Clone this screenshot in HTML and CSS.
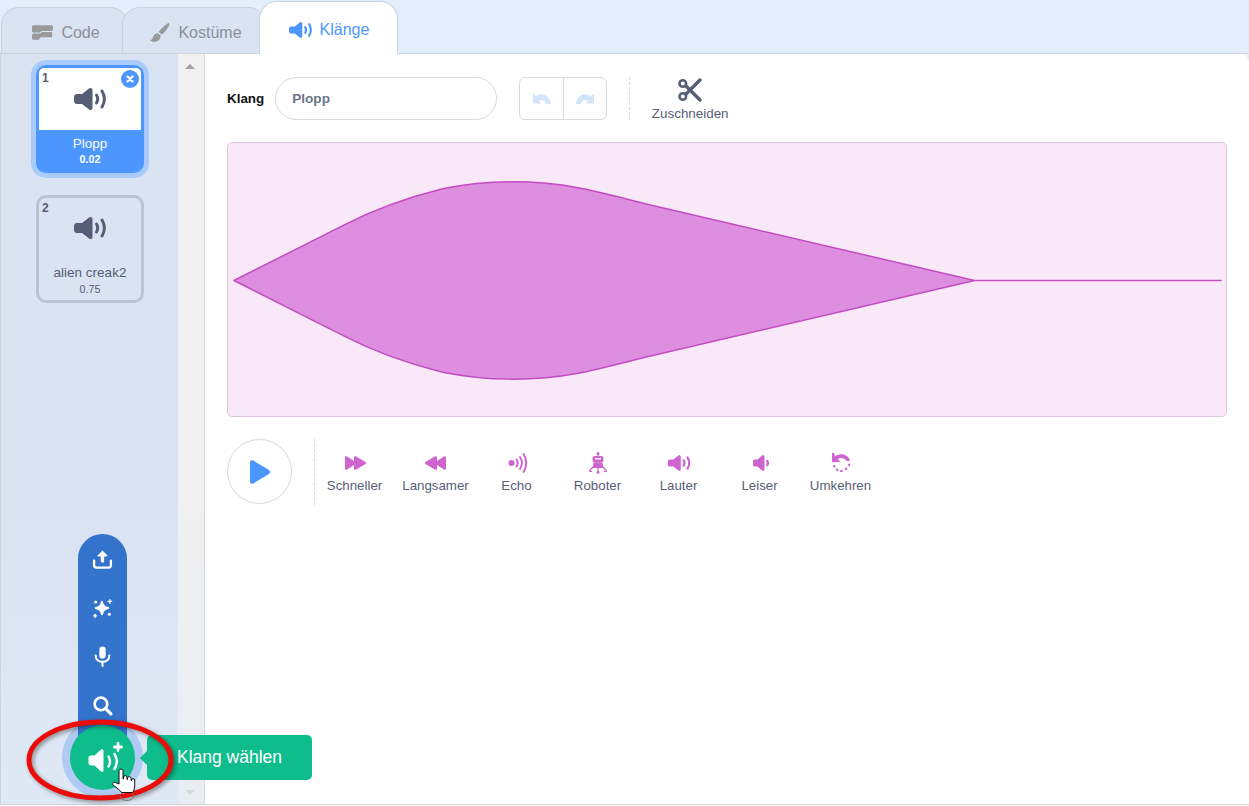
FILE: index.html
```html
<!DOCTYPE html>
<html lang="de">
<head>
  <meta charset="UTF-8">
  <title>Klänge</title>
  <link rel="stylesheet" href="styles.css">
</head>
<body>
  <svg class="defs" width="0" height="0">
    <symbol id="speaker" viewBox="0 0 32 24">
      <path d="M3 7h5L15 1.500c1.500-1.200 3.500-.3 3.500 1.500v18c0 1.800-2 2.700-3.500 1.500L8 17H3c-1.700 0-3-1.300-3-3v-4c0-1.700 1.300-3 3-3z" fill="currentColor"/>
      <path d="M22.500 8c1.500 2.500 1.500 5.500 0 8" fill="none" stroke="currentColor" stroke-width="3" stroke-linecap="round"/>
      <path d="M28 4c3 5 3 11 0 16" fill="none" stroke="currentColor" stroke-width="3" stroke-linecap="round"/>
    </symbol>
  </svg>

  <div class="app">
    <div class="tabs">
      <div class="tab tab-code">
        <svg class="tab-icon" viewBox="0 0 20 14"><path d="M0 1.500C0 .7.700 0 1.500 0h17c.8 0 1.500.7 1.500 1.500V4c0 .8-.7 1.500-1.500 1.500H9L7.500 7 H1.500C.7 7 0 6.300 0 5.500zM2 8h6l1.500-1.500H18c.8 0 1.200.5 1.200 1.200v2.600c0 .8-.5 1.200-1.200 1.200H8L6.500 14H1.500C.7 14 0 13.300 0 12.500V10c0-1.200 1-2 2-2z" fill="#999"/></svg>
        <span>Code</span>
      </div>
      <div class="tab tab-costume">
        <svg class="tab-icon" viewBox="0 0 22 22"><path d="M20.800 1C21.700 1.500 21.500 3 20 5.500c-1.800 3-4.300 6-6.800 7.700l-3-2.700C12.300 7.500 15.500 4.300 18.300 2.400 19.500 1.500 20.300.7 20.800 1zM9.300 11.800l2.900 2.600c0 3-2.400 6.400-6.200 6.400-2.300 0-4.500-.7-5-1.600 1.700-.5 2.600-1.500 3.100-3.300.6-2.300 2.500-3.900 5.200-4.100z" fill="#999"/></svg>
        <span>Kostüme</span>
      </div>
      <div class="tab tab-active">
        <svg class="speaker-icon"><use href="#speaker"/></svg>
        <span>Klänge</span>
      </div>
    </div>

    <div class="main">
      <div class="selector">
        <div class="sound-card selected">
          <span class="card-num">1</span>
          <span class="card-delete">
            <svg viewBox="0 0 10 10"><path d="M2.500 2.500l5 5M7.500 2.500l-5 5" stroke="#fff" stroke-width="2.400" stroke-linecap="round"/></svg>
          </span>
          <div class="card-thumb"><svg class="card-icon"><use href="#speaker"/></svg></div>
          <div class="card-info">
            <div class="card-name">Plopp</div>
            <div class="card-time">0.02</div>
          </div>
        </div>
        <div class="sound-card">
          <span class="card-num">2</span>
          <div class="card-thumb"><svg class="card-icon"><use href="#speaker"/></svg></div>
          <div class="card-info">
            <div class="card-name">alien creak2</div>
            <div class="card-time">0.75</div>
          </div>
        </div>
      </div>

      <div class="scrollbar">
        <span class="arrow arrow-up"></span>
        <span class="arrow arrow-down"></span>
      </div>

      <div class="editor">
        <div class="toolbar">
          <label class="name-label">Klang</label>
          <input class="name-input" type="text" value="Plopp">
          <div class="undo-group">
            <span class="undo-btn">
              <svg viewBox="0 0 20 14" width="20" height="14"><path d="M1 2.500v9h8.500L6.800 8.800C9 7.300 12.500 7.800 14.300 11.500c.3.600 1 .8 2.700.8 1.500 0 2.300-.6 2-1.500C17.500 5 13 1.700 9 2.200 7.300 2.400 5.500 3 4 4.200L2.500 2.200C2 1.600 1 1.800 1 2.500z" fill="#d4e4fb"/></svg>
            </span>
            <span class="undo-btn">
              <svg class="flip" viewBox="0 0 20 14" width="20" height="14"><path d="M1 2.500v9h8.500L6.800 8.800C9 7.300 12.500 7.800 14.300 11.500c.3.600 1 .8 2.700.8 1.500 0 2.300-.6 2-1.500C17.500 5 13 1.700 9 2.200 7.300 2.400 5.500 3 4 4.200L2.500 2.200C2 1.600 1 1.800 1 2.500z" fill="#d4e4fb"/></svg>
            </span>
          </div>
          <div class="dash-line"></div>
          <div class="trim">
            <svg viewBox="0 0 24 24" width="24" height="24">
              <circle cx="4.800" cy="5.500" r="3.300" fill="none" stroke="#575e75" stroke-width="2.600"/>
              <circle cx="4.800" cy="18.500" r="3.300" fill="none" stroke="#575e75" stroke-width="2.600"/>
              <path d="M8 8l14 14M8 16L22 2" stroke="#575e75" stroke-width="3.400" stroke-linecap="round"/>
            </svg>
            <span>Zuschneiden</span>
          </div>
        </div>

        <div class="wave-box">
          <svg class="wave" viewBox="0 0 1000 274" preserveAspectRatio="none">
            <path d="M6 138L115 83C140 70 175 56 215 46C240 41 262 39 285 39C310 39 330 41 351 45C368 48 390 54 418 61L748 138L995 138L748 138L418 215C390 222 368 228 351 231C330 235 310 237 285 237C262 237 240 235 215 230C175 220 140 206 115 193Z" fill="#dd8edf" stroke="#c34cc3" stroke-width="1.500" stroke-linejoin="round"/>
          </svg>
        </div>

        <div class="controls">
          <div class="play-btn">
            <svg viewBox="0 0 24 26" width="24" height="26"><path d="M2 3.500C2 1.500 4 .7 5.500 1.600l15.500 9.400c1.500.9 1.500 3.100 0 4L5.500 24.400C4 25.300 2 24.500 2 22.500z" fill="#4c97ff"/></svg>
          </div>
          <div class="dash-line tall"></div>
          <div class="effects">
            <div class="effect">
              <svg viewBox="0 0 24 22"><g transform="translate(2 3)"><path d="M0 2.500C0 1.300 1.200.8 2.100 1.500L9 6V2.500c0-1.200 1.300-1.700 2.200-1L20.500 7c.8.500.8 1.500 0 2l-9.300 5.500c-.9.700-2.200.2-2.200-1V10l-6.900 4.500C1.200 15.200 0 14.700 0 13.500z" fill="#cf63cf"/></g></svg>
              <span>Schneller</span>
            </div>
            <div class="effect">
              <svg class="flip" viewBox="0 0 24 22"><g transform="translate(2 3)"><path d="M0 2.500C0 1.300 1.200.8 2.100 1.500L9 6V2.500c0-1.200 1.300-1.700 2.200-1L20.500 7c.8.500.8 1.500 0 2l-9.300 5.500c-.9.700-2.200.2-2.200-1V10l-6.900 4.500C1.200 15.200 0 14.700 0 13.500z" fill="#cf63cf"/></g></svg>
              <span>Langsamer</span>
            </div>
            <div class="effect">
              <svg viewBox="0 0 24 22">
                <circle cx="6.500" cy="11" r="3" fill="#cf63cf"/>
                <path d="M11.500 7.500c1.400 2 1.400 5 0 7M15 5c2.400 3.500 2.400 8.500 0 12M18.500 2c3.600 5 3.600 13 0 18" fill="none" stroke="#cf63cf" stroke-width="2" stroke-linecap="round"/>
              </svg>
              <span>Echo</span>
            </div>
            <div class="effect">
              <svg viewBox="0 0 24 22">
                <circle cx="12" cy="1.500" r="1.500" fill="#cf63cf"/>
                <path d="M12 2v3" stroke="#cf63cf" stroke-width="1.200"/>
                <rect x="6.500" y="4" width="11" height="6.500" rx="2.500" fill="#cf63cf"/>
                <rect x="9" y="6" width="6" height="1.500" fill="#fff"/>
                <path d="M7.500 10.500h9l1 5.500h-11z" fill="#cf63cf"/>
                <path d="M7 15l-3.500 4M17 15l3.500 4M12 16v4M3 19.500h3M18 19.500h3" stroke="#cf63cf" stroke-width="1.200" fill="none"/>
                <circle cx="12" cy="20.500" r="1.400" fill="#cf63cf"/>
              </svg>
              <span>Roboter</span>
            </div>
            <div class="effect">
              <svg viewBox="0 0 24 22"><use href="#speaker" x="0.500" y="2.500" width="23" height="17"/></svg>
              <span>Lauter</span>
            </div>
            <div class="effect">
              <svg viewBox="0 0 24 22">
                <path d="M7 7.500h2.500L14 3.500c1-.8 2.500-.2 2.500 1v13c0 1.200-1.500 1.800-2.500 1l-4.500-4H7c-1.100 0-2-.9-2-2v-3c0-1.100.9-2 2-2z" fill="#cf63cf"/>
                <path d="M19.300 9c.8 1.200.8 2.800 0 4" fill="none" stroke="#cf63cf" stroke-width="2.400" stroke-linecap="round"/>
              </svg>
              <span>Leiser</span>
            </div>
            <div class="effect">
              <svg viewBox="0 0 24 22">
                <path d="M3 1.500v8.500h8.500L8.700 7.200c2.500-2 6.700-1.500 8.500 1.300.4.600 1 .7 1.800.7 1.400 0 2-.7 1.600-1.700C18.500 2.500 11 .3 6.200 4.500L4.800 1c-.4-.6-1.800-.3-1.800.5z" fill="#cf63cf"/>
                <path d="M20.300 12.500l-.3.800M17.500 16.500l-.8.600M13 19h-1M8.500 18l-.8-.6M5.500 14.500l-.4-.8" stroke="#cf63cf" stroke-width="2" stroke-linecap="round"/>
              </svg>
              <span>Umkehren</span>
            </div>
          </div>
        </div>
      </div>
    </div>
  </div>

  <!-- Schwebendes Menue unten links -->
  <div class="add-ring"></div>
  <div class="add-stack">
    <svg viewBox="0 0 20 20" width="21" height="21"><path d="M10 1.500l4.500 4.500c.4.500.1 1.200-.5 1.200h-2.400v4.300c0 .9-.7 1.500-1.600 1.500s-1.600-.6-1.600-1.500V7.200H6c-.6 0-.9-.7-.5-1.200z" fill="#fff"/><path d="M2 11v4.500c0 1.200 1 2.200 2.200 2.200h11.600c1.200 0 2.200-1 2.200-2.200V11" fill="none" stroke="#fff" stroke-width="2.200" stroke-linecap="round"/></svg>
    <svg viewBox="0 0 20 20" width="21" height="21"><path d="M9.500 3.500c.6 3.800 2.200 5.400 6 6-3.800.6-5.400 2.200-6 6-.6-3.800-2.200-5.400-6-6 3.800-.6 5.400-2.200 6-6z" fill="#fff" stroke="#fff" stroke-width="1.800" stroke-linejoin="round"/><path d="M17 1.500v3.500M15.200 3.200h3.500M3 15.500v3M1.500 17h3" stroke="#fff" stroke-width="1.300" stroke-linecap="round"/><circle cx="3.500" cy="3.800" r="1.500" fill="#fff"/><circle cx="16.500" cy="15.500" r="1.500" fill="#fff"/></svg>
    <svg viewBox="0 0 20 20" width="21" height="21"><rect x="7" y="0.500" width="6" height="11.500" rx="3" fill="#fff"/><path d="M3.500 9c0 3.800 3 6 6.500 6s6.500-2.200 6.500-6M10 15v4" fill="none" stroke="#fff" stroke-width="2" stroke-linecap="round"/></svg>
    <svg viewBox="0 0 20 20" width="21" height="21"><circle cx="8.500" cy="8.500" r="6" fill="none" stroke="#fff" stroke-width="2.600"/><path d="M13 13l5 5" stroke="#fff" stroke-width="3" stroke-linecap="round"/></svg>
  </div>

  <div class="add-btn">
    <svg viewBox="0 0 40 34" width="40" height="34">
      <path d="M6 14.500h3.500L16 8.500c.9-.8 2.500-.2 2.500 1.200v19.600c0 1.400-1.600 2-2.500 1.200l-6.500-6H6c-1.500 0-2.500-1-2.500-2.500v-5c0-1.500 1-2.500 2.500-2.500z" fill="#fff"/>
      <path d="M23.500 15.500c1.800 3 1.800 7 0 10M29.500 13c2.800 4.500 2.800 10.500 0 15" fill="none" stroke="#fff" stroke-width="2.400" stroke-linecap="round"/>
      <path d="M33 2.500v7M29.500 6h7" stroke="#fff" stroke-width="2.800" stroke-linecap="round"/>
    </svg>
  </div>

  <div class="tooltip">Klang wählen</div>

  <svg class="mark" viewBox="0 0 156 92" width="156" height="92">
    <ellipse cx="75" cy="44" rx="71" ry="38" fill="none" stroke="#ea0b0b" stroke-width="5"/>
  </svg>

  <svg class="cursor" viewBox="0 0 28 36" width="28" height="36">
    <ellipse cx="16" cy="28" rx="7" ry="4.500" fill="none" stroke="#777" stroke-width="1"/>
    <path d="M8 3c0-2.500 4-2.500 4 0v8h.5V9c0-1.800 3.500-1.800 3.500 0v2.500h.5V10c0-1.800 3.500-1.800 3.500 0v2.500h.5V12c0-1.800 3.200-1.800 3.200 0v6c0 3-1 5-2.200 6.500H10.500c-1-2-4-4-8.500-7.500-1.500-1.500.5-3.500 2.500-2.500L8 16z" fill="#fff" stroke="#111" stroke-width="1"/>
  </svg>
</body>
</html>
```

FILE: styles.css
```css
* {
  box-sizing: border-box;
}

html, body {
  margin: 0;
  height: 100%;
}

body {
  font-family: "Liberation Sans", Arial, sans-serif;
  background-color: #fff;
  color: #575e75;
  overflow: hidden;
  position: relative;
}

.defs {
  position: absolute;
}

.flip {
  transform: scaleX(-1);
}

.app {
  height: 805px;
  display: flex;
  flex-direction: column;
  background-color: #e3eefd;
  border-bottom: 1px solid #ccd3dd;
}

/* Tabs */
.tabs {
  height: 54px;
  padding-left: 1px;
  display: flex;
  align-items: flex-end;
  flex: none;
}

.tab {
  height: 47px;
  display: flex;
  align-items: center;
  justify-content: center;
  gap: 8px;
  padding: 3px 0 0 3px;
  font-size: 16px;
  color: #8b8f9c;
  background-color: #d9e3f2;
  border: 1px solid #c9d1de;
  border-bottom: none;
  border-radius: 18px 18px 0 0;
}

.tab-code {
  width: 127px;
}

.tab-costume {
  width: 144px;
  margin-left: -6px;
}

.tab-active {
  width: 139px;
  height: 53px;
  margin-left: -7px;
  padding-left: 1px;
  color: #4c97ff;
  background-color: #fff;
  position: relative;
  z-index: 1;
}

.tab-icon {
  width: 21px;
  height: 21px;
}

.tab-code .tab-icon {
  height: 15px;
}

.speaker-icon {
  color: #4c97ff;
  width: 23px;
  height: 18px;
}

/* Main area */
.main {
  flex: 1;
  display: flex;
  min-height: 0;
  border-top: 1px solid #ccd3dd;
  margin-top: -1px;
}

.selector {
  width: 178px;
  flex: none;
  padding: 11px 0 0 36px;
  display: flex;
  flex-direction: column;
  gap: 22px;
  background: linear-gradient(#d9e3f2 60%, #dfe8f5);
  border-left: 1px solid #ccd3dd;
}

.sound-card {
  width: 108px;
  height: 108px;
  margin-left: -1px;
  border: 3px solid #b9c3d2;
  border-radius: 10px;
  position: relative;
  display: flex;
  flex-direction: column;
  text-align: center;
}

.sound-card.selected {
  border-color: #4c97ff;
  background-color: #4c97ff;
  box-shadow: 0 0 0 5px #a9cbfb;
}

.card-num {
  position: absolute;
  left: 3px;
  top: 3px;
  font-size: 12px;
  font-weight: bold;
  color: #575e75;
}

.card-delete {
  position: absolute;
  top: 2px;
  right: 2px;
  width: 18px;
  height: 18px;
  border-radius: 50%;
  background-color: #4c97ff;
  display: flex;
  align-items: center;
  justify-content: center;
}

.card-delete svg {
  width: 10px;
  height: 10px;
}

.card-thumb {
  height: 62px;
  flex: none;
  padding-top: 18px;
  display: flex;
  justify-content: center;
  border-radius: 5px 5px 0 0;
}

.card-icon {
  width: 32px;
  height: 24px;
  color: #575e75;
}

.selected .card-thumb {
  background-color: #fff;
  padding-top: 19px;
}

.card-info {
  padding-top: 5px;
}

.card-name {
  font-size: 13.500px;
  line-height: 15px;
}

.card-time {
  font-size: 10.700px;
  line-height: 15px;
  margin-top: 2px;
}

.selected .card-info {
  color: #fff;
  padding-top: 6px;
}

.selected .card-time {
  font-weight: bold;
  margin-top: 1px;
}

.scrollbar {
  width: 27px;
  flex: none;
  position: relative;
  background: linear-gradient(#f0f0f0 60%, #e9edf2);
  border-right: 1px solid #d5d9df;
}

.arrow {
  position: absolute;
  left: 7px;
  width: 0;
  height: 0;
  border-left: 5px solid transparent;
  border-right: 5px solid transparent;
}

.arrow-up {
  top: 10px;
  border-bottom: 5px solid #a3a3a3;
}

.arrow-down {
  bottom: 9px;
  border-top: 5px solid #d5d8dc;
}

/* Editor */
.editor {
  flex: 1;
  min-width: 0;
  padding: 23px 22px 0;
  background-color: #fff;
  border-radius: 0 8px 0 0;
}

.toolbar {
  display: flex;
  align-items: center;
  height: 43px;
}

.name-label {
  font-size: 13.400px;
  font-weight: bold;
  color: #111;
  margin-right: 11px;
}

.name-input {
  width: 222px;
  height: 43px;
  padding: 0 16px;
  border: 1px solid #d9d9d9;
  border-radius: 22px;
  font-family: inherit;
  font-size: 13.600px;
  font-weight: bold;
  color: #6b7288;
  outline: none;
}

.undo-group {
  display: flex;
  height: 43px;
  margin-left: 22px;
  border: 1px solid #d9d9d9;
  border-radius: 6px;
}

.undo-btn {
  width: 43px;
  display: flex;
  align-items: center;
  justify-content: center;
}

.undo-btn + .undo-btn {
  border-left: 1px solid #d9d9d9;
}

.dash-line {
  width: 0;
  height: 43px;
  margin-left: 22px;
  border-left: 1px dashed #d9d9d9;
}

.trim {
  width: 78px;
  margin-left: 21px;
  display: flex;
  flex-direction: column;
  align-items: center;
  gap: 4px;
  font-size: 13.400px;
  padding-top: 2px;
}

.wave-box {
  height: 275px;
  margin-top: 22px;
  background-color: #f8e8f8;
  border: 1px solid #dcc8dc;
  border-radius: 5px;
  overflow: hidden;
}

.wave {
  display: block;
  width: 100%;
  height: 100%;
}

.controls {
  display: flex;
  align-items: flex-start;
  margin-top: 22px;
}

.play-btn {
  width: 65px;
  height: 65px;
  border: 1px solid #d9d9d9;
  border-radius: 50%;
  display: flex;
  align-items: center;
  justify-content: center;
}

.controls .tall {
  height: 66px;
}

.effects {
  display: flex;
  margin-left: -1px;
  padding-top: 13px;
}

.effect {
  width: 81px;
  display: flex;
  flex-direction: column;
  align-items: center;
  gap: 4px;
  font-size: 13.300px;
}

.effect svg {
  width: 24px;
  height: 22px;
  color: #cf63cf;
}

/* Floating things */
.add-stack {
  position: absolute;
  left: 78px;
  top: 534px;
  width: 49px;
  height: 212px;
  padding-top: 15px;
  border-radius: 25px 25px 0 0;
  background-color: #3373cc;
  display: flex;
  flex-direction: column;
  align-items: center;
  gap: 27.500px;
}

.add-ring {
  position: absolute;
  left: 62px;
  top: 717px;
  width: 81px;
  height: 81px;
  border-radius: 50%;
  background-color: #b0cbf3;
}

.add-btn {
  position: absolute;
  left: 70px;
  top: 725px;
  width: 65px;
  height: 65px;
  border-radius: 50%;
  background-color: #0fbd8c;
  display: flex;
  align-items: center;
  justify-content: center;
  padding-left: 5px;
}

.tooltip {
  position: absolute;
  left: 147px;
  top: 735px;
  width: 165px;
  height: 45px;
  padding-left: 30px;
  display: flex;
  align-items: center;
  background-color: #0fbd8c;
  border-radius: 5px;
  color: #fff;
  font-size: 17.500px;
}

.tooltip::before {
  content: "";
  position: absolute;
  left: -5px;
  top: 18px;
  width: 10px;
  height: 10px;
  background-color: #0fbd8c;
  transform: rotate(45deg);
}

.mark {
  position: absolute;
  left: 25px;
  top: 716px;
  filter: drop-shadow(2px 2px 2px rgba(0, 0, 0, 0.4));
}

.cursor {
  position: absolute;
  left: 111px;
  top: 768px;
}
```
